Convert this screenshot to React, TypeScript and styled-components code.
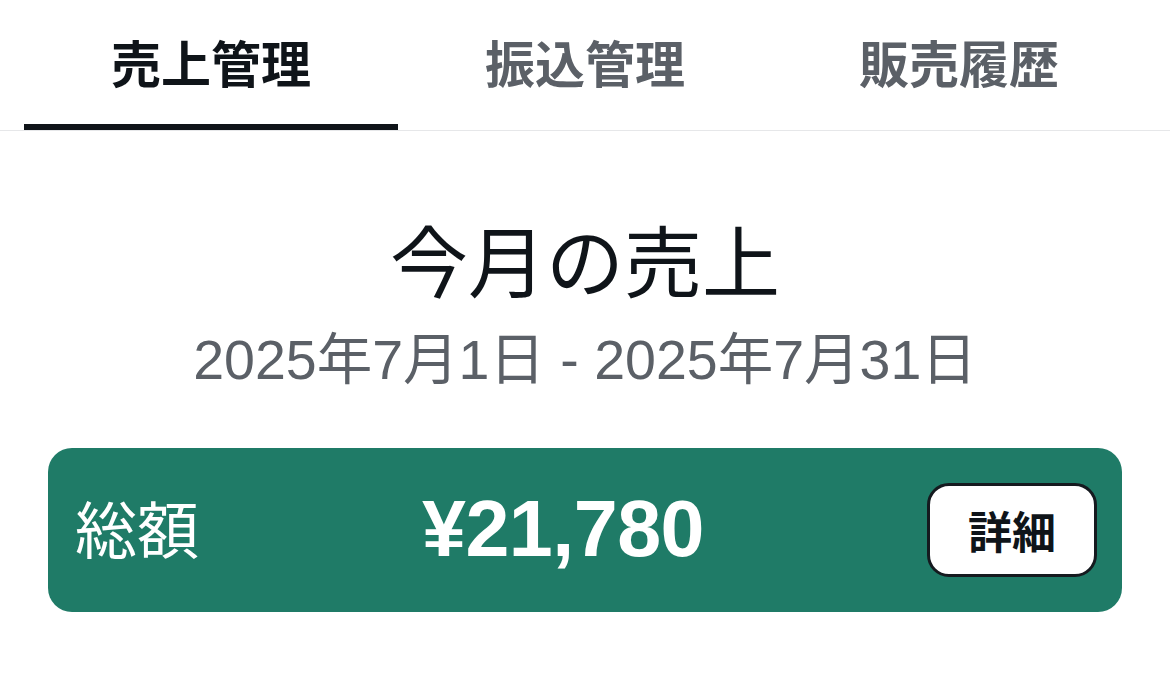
import React, { useState } from "react";
import styled, { createGlobalStyle } from "styled-components";

const GlobalStyle = createGlobalStyle`
    html, body {
        margin: 0;
        padding: 0;
        background: #ffffff;
    }
    body {
        font-family: "Liberation Sans", "Noto Sans CJK JP", sans-serif;
        -webkit-font-smoothing: antialiased;
    }
`;

const Page = styled.div`
    width: 1170px;
    min-height: 695px;
    background: #ffffff;
`;

const TabBar = styled.nav`
    display: grid;
    grid-template-columns: repeat(3, 1fr);
    padding: 0 24px;
    border-bottom: 1px solid #e6e7e9;
`;

const Tab = styled.button<{ active: boolean }>`
    height: 130px;
    box-sizing: border-box;
    display: flex;
    align-items: center;
    justify-content: center;
    padding: 0 0 2px;
    margin: 0;
    background: none;
    border: none;
    border-bottom: 6px solid ${({ active }) => (active ? "#0f1419" : "transparent")};
    font-family: "Noto Sans CJK JP", sans-serif;
    font-size: 50px;
    font-weight: 700;
    line-height: 1;
    color: ${({ active }) => (active ? "#0f1419" : "#5b6067")};
    cursor: pointer;
`;

const Summary = styled.section`
    display: flex;
    flex-direction: column;
    align-items: center;
    padding-top: 80px;
`;

const Heading = styled.h1`
    margin: 0;
    font-family: "Noto Sans CJK JP", sans-serif;
    font-size: 78px;
    font-weight: 400;
    line-height: 94px;
    color: #0f1419;
`;

const Period = styled.p`
    margin: 23px 0 0;
    font-family: "Liberation Sans", "Noto Sans CJK JP", sans-serif;
    font-size: 55.5px;
    line-height: 65px;
    color: #5b6067;
`;

const TotalCard = styled.div`
    display: flex;
    align-items: center;
    justify-content: space-between;
    height: 164px;
    box-sizing: border-box;
    margin: 55px 48px 0;
    padding: 0 25px 0 27px;
    border-radius: 24px;
    background: #1f7b67;
    color: #ffffff;
`;

const TotalLabel = styled.span`
    font-family: "Noto Sans CJK JP", sans-serif;
    font-size: 62px;
    font-weight: 400;
    line-height: 1;
    padding-bottom: 6px;
`;

const Amount = styled.span`
    font-family: "Liberation Sans", "Noto Sans CJK JP", sans-serif;
    font-size: 79px;
    font-weight: 700;
    line-height: 1;
    letter-spacing: -0.5px;
    padding-bottom: 4px;
`;

const DetailButton = styled.button`
    width: 170px;
    height: 94px;
    box-sizing: border-box;
    display: flex;
    align-items: center;
    justify-content: center;
    padding: 0;
    border: 3px solid #151a1f;
    border-radius: 22px;
    background: #ffffff;
    font-family: "Noto Sans CJK JP", sans-serif;
    font-size: 44px;
    font-weight: 700;
    line-height: 1;
    color: #0f1419;
    cursor: pointer;
`;

const TABS = ["売上管理", "振込管理", "販売履歴"];

export default function App() {
    const [current, setCurrent] = useState(0);

    return (
        <Page>
            <GlobalStyle />
            <TabBar>
                {TABS.map((label, i) => (
                    <Tab key={label} active={i === current} onClick={() => setCurrent(i)}>
                        {label}
                    </Tab>
                ))}
            </TabBar>
            <Summary>
                <Heading>今月の売上</Heading>
                <Period>2025年7月1日 - 2025年7月31日</Period>
            </Summary>
            <TotalCard>
                <TotalLabel>総額</TotalLabel>
                <Amount>¥21,780</Amount>
                <DetailButton>詳細</DetailButton>
            </TotalCard>
        </Page>
    );
}
